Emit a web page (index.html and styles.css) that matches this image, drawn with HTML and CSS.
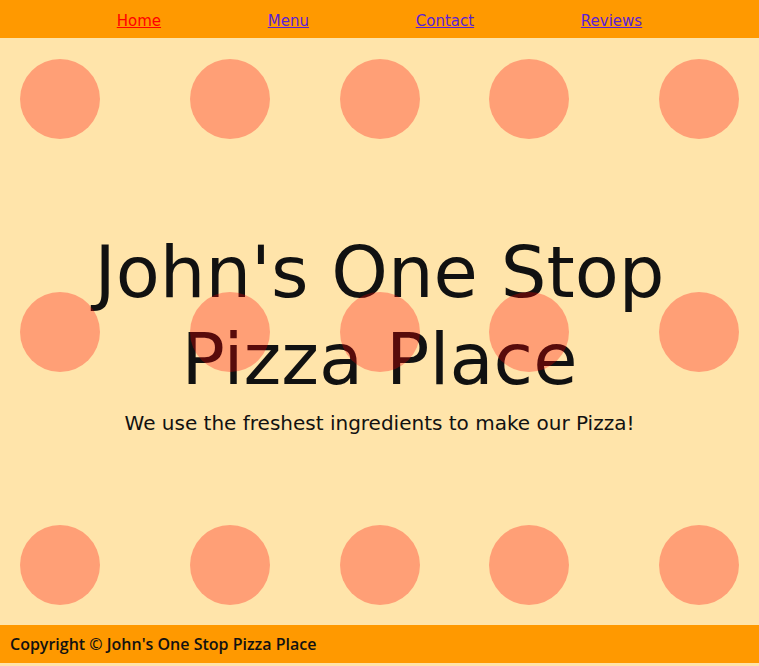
FILE: index.html
```html
<!DOCTYPE html>
<html lang="en">
<head>
<meta charset="utf-8">
<title>John's One Stop Pizza Place</title>
<link rel="stylesheet" href="styles.css">
</head>
<body>
<header class="topbar">
  <nav class="nav">
    <a class="nav-link nav-link--active" href="#">Home</a>
    <a class="nav-link" href="#">Menu</a>
    <a class="nav-link" href="#">Contact</a>
    <a class="nav-link" href="#">Reviews</a>
  </nav>
</header>
<main class="hero">
  <div class="hero-text">
    <h1 class="hero-title">John's One Stop<br>Pizza Place</h1>
    <p class="hero-sub">We use the freshest ingredients to make our Pizza!</p>
  </div>
  <div class="dots" aria-hidden="true">
    <span class="dot"></span><span class="dot"></span><span class="dot"></span><span class="dot"></span><span class="dot"></span>
    <span class="dot"></span><span class="dot"></span><span class="dot"></span><span class="dot"></span><span class="dot"></span>
    <span class="dot"></span><span class="dot"></span><span class="dot"></span><span class="dot"></span><span class="dot"></span>
  </div>
</main>
<footer class="footer">
  <p class="footer-text">Copyright © John's One Stop Pizza Place</p>
</footer>
</body>
</html>
```
FILE: styles.css
```css
* { box-sizing: border-box; }

html, body {
  margin: 0;
  padding: 0;
}

body {
  background: #ffe4aa;
  font-family: "DejaVu Sans", "Liberation Sans", sans-serif;
  color: #111;
}

.topbar {
  background: #ff9900;
  height: 38px;
  padding: 3px 10px 0;
}

.nav {
  height: 100%;
  display: flex;
  justify-content: space-evenly;
  align-items: center;
}

.nav-link {
  font-size: 15px;
  color: #5a1fd6;
  text-decoration: underline;
}

.nav-link--active {
  color: #ff0000;
}

.hero {
  position: relative;
  height: 587px;
  display: flex;
  align-items: center;
  justify-content: center;
  text-align: center;
}

.hero-title {
  margin: 0;
  font-size: 72px;
  font-weight: 400;
  line-height: 87px;
  color: #111;
}

.hero-sub {
  margin: 8px 0 0;
  font-size: 20px;
  line-height: 24px;
  color: #111;
}

.dots {
  position: absolute;
  inset: 0;
  display: grid;
  grid-template-columns: 20px 80px 90px 80px 70px 80px 69px 80px 90px 80px 20px;
  grid-template-rows: 21px 80px 153px 80px 153px 80px 20px;
  pointer-events: none;
}

.dot {
  width: 80px;
  height: 80px;
  border-radius: 50%;
  background: #ff0000;
  opacity: 0.3;
}

.dot:nth-child(5n+1) { grid-column: 2; }
.dot:nth-child(5n+2) { grid-column: 4; }
.dot:nth-child(5n+3) { grid-column: 6; }
.dot:nth-child(5n+4) { grid-column: 8; }
.dot:nth-child(5n+5) { grid-column: 10; }

.dot:nth-child(-n+5) { grid-row: 2; }
.dot:nth-child(n+6):nth-child(-n+10) { grid-row: 4; }
.dot:nth-child(n+11) { grid-row: 6; }

.footer {
  background: #ff9900;
  height: 38px;
  padding: 0 10px;
  display: flex;
  align-items: center;
}

.footer-text {
  margin: 0;
  font-family: "Open Sans", "DejaVu Sans", sans-serif;
  font-size: 16px;
  font-weight: 600;
  color: #111;
}
```
